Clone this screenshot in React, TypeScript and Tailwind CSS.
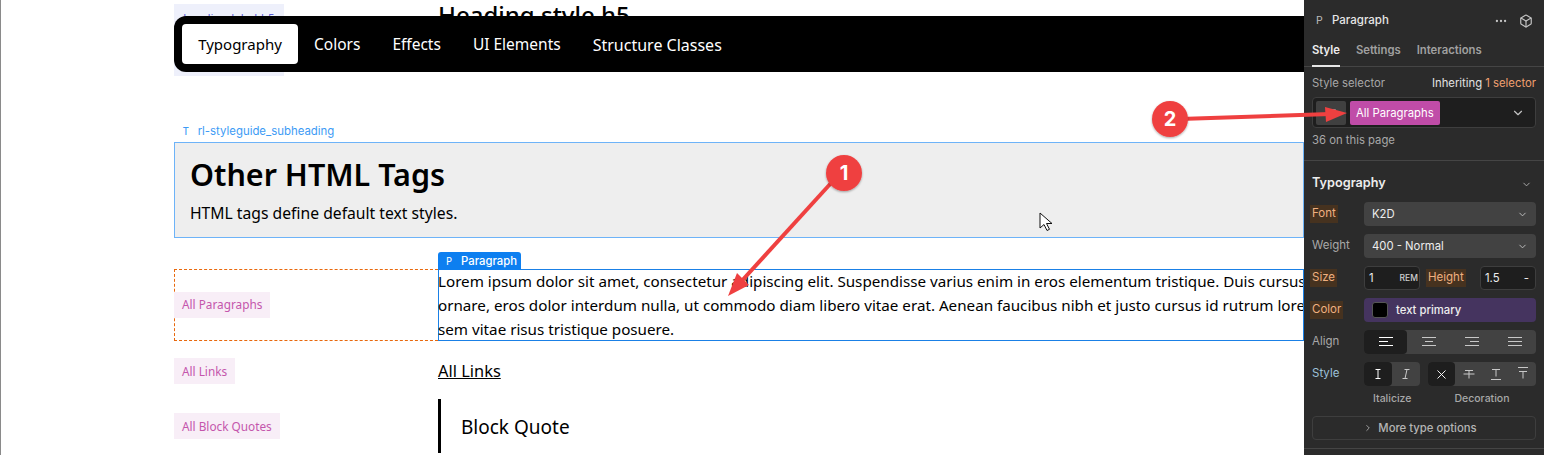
import { ChevronDown, ChevronRight, Ellipsis, Box, X } from "lucide-react";

const uiFont = "font-['Inter',sans-serif]";
const pageFont = "font-['Noto_Sans',sans-serif]";

function TagLabel({ text, className = "" }: { text: string; className?: string }) {
  return (
    <span className={`inline-flex h-[26px] items-center bg-[#f8eef7] px-2 text-[11.8px] text-[#c456ac] ${className}`}>
      {text}
    </span>
  );
}

function AlignIcon({ lines }: { lines: [number, number][] }) {
  return (
    <svg width="16" height="12" viewBox="0 0 16 12" stroke="currentColor" strokeWidth="1">
      {lines.map(([a, b], i) => (
        <line key={i} x1={a} x2={b} y1={1.5 + i * 4} y2={1.5 + i * 4} />
      ))}
    </svg>
  );
}

function FieldLabel({ text, on }: { text: string; on?: boolean }) {
  return (
    <span className={`-ml-[2px] inline-flex h-[18px] items-center px-0.5 text-[11.5px] ${on ? "bg-[#46321f] text-[#f0b080]" : "text-[#a8a8a8]"}`}>
      {text}
    </span>
  );
}

function Panel() {
  return (
    <aside className={`flex h-[455px] w-[240px] shrink-0 flex-col overflow-hidden bg-[#2b2b2b] text-[11.3px] ${uiFont}`}>
      {/* Header */}
      <div className="flex h-[40px] items-center pl-[12px] pr-[11px] pt-[1px] text-[#e6e6e6]">
        <span className="w-[16px] text-[10.5px] text-[#bdbdbd]">P</span>
        <span className="text-[11.5px] font-medium">Paragraph</span>
        <Ellipsis className="ml-auto h-[14px] w-[14px] text-[#c4c4c4]" />
        <Box className="ml-[11px] h-[14px] w-[14px] text-[#c4c4c4]" />
      </div>

      {/* Tabs */}
      <div className="flex h-[27px] gap-[16px] border-b border-[#454545] px-[8px] text-[11.3px] font-semibold text-[#a0a0a0]">
        <span className="h-[27px] border-b-2 border-[#e6e6e6] pt-[2px] text-[#ededed]">Style</span>
        <span className="pt-[2px]">Settings</span>
        <span className="pt-[2px]">Interactions</span>
      </div>

      {/* Style selector */}
      <div className="flex h-[94px] flex-col border-b border-[#454545] px-[8px]">
        <div className="flex h-[30px] items-center justify-between pt-[3px] text-[#a8a8a8]">
          <span>Style selector</span>
          <span className="text-[#e2e2e2]">
            Inheriting <span className="text-[#f0a070]">1 selector</span>
          </span>
        </div>
        <div className="flex h-[31px] items-center gap-[4px] rounded-[4px] border border-[#3e3e3e] bg-[#1e1e1e] pl-[3px] pr-[10px]">
          <span className="flex h-[24px] w-[30px] items-center justify-center rounded-[2px] bg-[#404040]">
            <span className="h-[7px] w-[10px] rounded-[1px] bg-[#8a8a8a]" />
          </span>
          <span className="flex h-[24px] items-center rounded-[2px] bg-[#c04ca8] px-[6px] pt-[1px] text-white">All Paragraphs</span>
          <ChevronDown className="ml-auto h-[14px] w-[14px] text-[#c4c4c4]" />
        </div>
        <span className="mt-[4px] text-[#a8a8a8]">36 on this page</span>
      </div>

      {/* Typography */}
      <div className="flex flex-col gap-[8px] px-[8px]">
        <div className="flex h-[33px] items-end justify-between pr-[4px] pb-[2px]">
          <span className="text-[12.7px] font-semibold text-[#ededed]">Typography</span>
          <ChevronDown className="mb-[2px] h-[11px] w-[11px] text-[#b0b0b0]" />
        </div>

        <div className="flex h-[24px] items-center">
          <div className="w-[52px]"><FieldLabel text="Font" on /></div>
          <div className="flex h-[24px] w-[172px] items-center justify-between rounded-[4px] bg-[#424242] pl-[8px] pr-[8px] text-[#ededed]">
            K2D <ChevronDown className="h-[11px] w-[11px] text-[#c4c4c4]" />
          </div>
        </div>

        <div className="flex h-[24px] items-center">
          <div className="w-[52px]"><FieldLabel text="Weight" /></div>
          <div className="flex h-[24px] w-[172px] items-center justify-between rounded-[4px] bg-[#424242] pl-[8px] pr-[8px] text-[#ededed]">
            400 - Normal <ChevronDown className="h-[11px] w-[11px] text-[#c4c4c4]" />
          </div>
        </div>

        <div className="flex h-[24px] items-center">
          <div className="w-[52px]"><FieldLabel text="Size" on /></div>
          <div className="flex h-[24px] w-[56px] items-center justify-between rounded-[4px] border border-[#3e3e3e] bg-[#1e1e1e] pl-[4px] pr-[1px] text-[#ededed]">
            1 <span className="text-[8.5px] font-medium text-[#d0d0d0]">REM</span>
          </div>
          <div className="ml-[8px] w-[52px]"><FieldLabel text="Height" on /></div>
          <div className="flex h-[24px] w-[56px] items-center justify-between rounded-[4px] border border-[#3e3e3e] bg-[#1e1e1e] pl-[4px] pr-[6px] text-[#ededed]">
            1.5 <span>-</span>
          </div>
        </div>

        <div className="flex h-[24px] items-center">
          <div className="w-[52px]"><FieldLabel text="Color" on /></div>
          <div className="flex h-[24px] w-[172px] items-center gap-[8px] rounded-[4px] bg-[#45345f] pl-[8px] font-medium text-[#ededed]">
            <span className="h-[16px] w-[16px] rounded-[3px] border border-[#555] bg-black" />
            text primary
          </div>
        </div>

        <div className="flex h-[24px] items-center">
          <div className="w-[52px]"><FieldLabel text="Align" /></div>
          <div className="grid h-[24px] w-[172px] grid-cols-4 items-center rounded-[4px] bg-[#424242] text-[#c8c8c8]">
            <span className="flex h-[24px] items-center justify-center rounded-[4px] bg-[#1e1e1e] text-white">
              <AlignIcon lines={[[1, 15], [1, 10], [1, 15]]} />
            </span>
            <span className="flex justify-center"><AlignIcon lines={[[1, 15], [4, 12], [1, 15]]} /></span>
            <span className="flex justify-center"><AlignIcon lines={[[1, 15], [6, 15], [1, 15]]} /></span>
            <span className="flex justify-center"><AlignIcon lines={[[1, 15], [1, 15], [1, 15]]} /></span>
          </div>
        </div>

        <div className="flex h-[24px] items-center">
          <div className="w-[52px]"><span className="-ml-[2px] px-0.5 text-[11.5px] text-[#9cc0d8]">Style</span></div>
          <div className="flex h-[24px] w-[56px] rounded-[4px] bg-[#424242] text-[#c8c8c8]">
            <span className="flex w-[28px] items-center justify-center rounded-[4px] bg-[#1e1e1e] text-white">
              <svg width="10" height="12" viewBox="0 0 10 12" stroke="currentColor"><path d="M2.5 1.5h5M5 1.5v9M2.5 10.5h5" /></svg>
            </span>
            <span className="flex w-[28px] items-center justify-center">
              <svg width="10" height="12" viewBox="0 0 10 12" stroke="currentColor"><path d="M3.5 1.5h5M6 1.5l-2 9M1.5 10.5h5" /></svg>
            </span>
          </div>
          <div className="ml-[8px] flex h-[24px] w-[108px] rounded-[4px] bg-[#424242] text-[#c8c8c8]">
            <span className="flex w-[27px] items-center justify-center rounded-[4px] bg-[#1e1e1e] text-white">
              <X className="h-[15px] w-[15px]" strokeWidth={1.5} />
            </span>
            <span className="flex w-[27px] items-center justify-center">
              <svg width="12" height="12" viewBox="0 0 12 12" stroke="currentColor"><path d="M2 2.5h8M6 2.5v8M0.5 6h11" /></svg>
            </span>
            <span className="flex w-[27px] items-center justify-center">
              <svg width="12" height="14" viewBox="0 0 12 14" stroke="currentColor"><path d="M2 2.5h8M6 2.5v7M1 12.5h10" /></svg>
            </span>
            <span className="flex w-[27px] items-center justify-center">
              <svg width="12" height="14" viewBox="0 0 12 14" stroke="currentColor"><path d="M1 0.5h10M2 4.5h8M6 4.5v7" /></svg>
            </span>
          </div>
        </div>
      </div>

      <div className="mt-[5px] flex h-[16px] items-center px-[8px] text-[10.5px] font-medium text-[#a8a8a8]">
        <span className="ml-[61px]">Italicize</span>
        <span className="ml-[43px]">Decoration</span>
      </div>

      <div className="mx-[8px] mt-[9px] flex h-[24px] items-center justify-center gap-[5px] rounded-[4px] border border-[#3e3e3e] pr-[8px] font-medium text-[#b4b4b4]">
        <ChevronRight className="h-[10px] w-[10px]" /> More type options
      </div>
      <div className="mt-[8px] border-t border-[#454545]" />
    </aside>
  );
}

function Main() {
  return (
    <main className={`relative h-[455px] flex-1 overflow-hidden border-l border-[#8a8a8a] bg-white text-black ${pageFont}`}>
      <div className="pl-[173px]">
        {/* Heading rows hidden under the nav */}
        <div className="flex h-[121px]">
          <div className="w-[264px] shrink-0 pt-[4px]">
            <span className="inline-flex h-[72px] w-[110px] justify-center bg-[#eef0fb] pt-[5px] text-[11.5px] text-[#5c5cd8]">heading-label-h5</span>
          </div>
          <div className="-mt-[2px] text-[24px] font-medium leading-[34px]">
            Heading style h5
            <div className="mt-[15px] text-[20px] leading-[26px]">Heading style h6</div>
          </div>
        </div>

        {/* Subheading */}
        <div className="flex h-[21px] items-center gap-[9px] pl-[9px] text-[11.4px] text-[#3d9bf5]">
          <span className="text-[10px] font-medium">T</span>
          <span className={uiFont}>rl-styleguide_subheading</span>
        </div>
        <div className="h-[96px] border border-[#6db3f8] bg-[#eeeeee] pl-[15px] pt-[11px]">
          <h2 className="text-[30.5px] font-semibold leading-[40px]">Other HTML Tags</h2>
          <p className="mt-[9px] text-[15.7px] leading-[20px]">HTML tags define default text styles.</p>
        </div>

        {/* Paragraph row */}
        <div className="mt-[31px] flex h-[72px]">
          <div className="flex w-[264px] shrink-0 items-center border border-r-0 border-dashed border-[#e8680c]">
            <TagLabel text="All Paragraphs" className="-ml-px" />
          </div>
          <div className="relative min-w-0 flex-1 border border-[#1a80e6]">
            <div className="absolute -top-[18px] -left-px flex h-[18px] items-center gap-[9px] rounded-t-[3px] bg-[#0d7ff0] pl-[8px] pr-[4px] text-white">
              <span className="text-[10px] font-normal">P</span>
              <span className={`text-[11.3px] font-medium ${uiFont}`}>Paragraph</span>
            </div>
            <p className="-ml-px -mt-px overflow-hidden whitespace-nowrap text-[15.2px] leading-[24px]">
              Lorem ipsum dolor sit amet, consectetur adipiscing elit. Suspendisse varius enim in eros elementum tristique. Duis cursus
              <br />
              ornare, eros dolor interdum nulla, ut commodo diam libero vitae erat. Aenean faucibus nibh et justo cursus id rutrum lorem
              <br />
              sem vitae risus tristique posuere.
            </p>
          </div>
        </div>

        {/* Links */}
        <div className="mt-[17px] flex h-[26px] items-center">
          <div className="w-[264px] shrink-0"><TagLabel text="All Links" /></div>
          <a className="text-[16.4px] underline">All Links</a>
        </div>

        {/* Block quote */}
        <div className="mt-[15px] flex h-[54px] items-center">
          <div className="w-[264px] shrink-0"><TagLabel text="All Block Quotes" /></div>
          <div className="flex h-[54px] items-center border-l-[3px] border-black pl-[20px] pt-[2px] text-[19px]">Block Quote</div>
        </div>
      </div>

      {/* Sticky nav over the page */}
      <nav className="absolute left-[173px] top-[16px] flex h-[56px] w-[1131px] items-center gap-[8px] rounded-l-[12px] bg-black pl-[8px] text-[15.5px] text-white">
        <span className="flex h-[40px] w-[116px] items-center justify-center rounded-[4px] bg-white text-[15px] text-black">Typography</span>
        <span className="px-[8px] pt-[1px]">Colors</span>
        <span className="ml-[8px] px-[8px] pt-[1px]">Effects</span>
        <span className="ml-[8px] px-[8px] pt-[1px]">UI Elements</span>
        <span className="ml-[8px] px-[8px] pt-[1px] text-[16px]">Structure Classes</span>
      </nav>

      {/* Cursor */}
      <svg className="absolute left-[1038px] top-[212px]" width="14" height="20" viewBox="0 0 14 20">
        <path d="M1 1v15l4-3.5 3 6 2.5-1.2-3-5.8h5.5z" fill="#fff" stroke="#111" strokeWidth="1" />
      </svg>
    </main>
  );
}

function Annotations() {
  return (
    <svg className="pointer-events-none absolute inset-0" width="1544" height="455" viewBox="0 0 1544 455">
      <defs>
        <filter id="shadow" x="-30%" y="-30%" width="160%" height="160%">
          <feDropShadow dx="0" dy="1" stdDeviation="1" floodColor="#000" floodOpacity="0.35" />
        </filter>
      </defs>
      <g fill="#ef4040">
        <line x1="832" y1="182" x2="738" y2="285" stroke="#ef4040" strokeWidth="4" />
        <path d="M728 296 L737 273 L749 285 Z" />
        <line x1="1180" y1="119" x2="1330" y2="114" stroke="#ef4040" strokeWidth="4" />
        <path d="M1347 113 L1325 107 L1326 122 Z" />
      </g>
      <g filter="url(#shadow)">
        <circle cx="844" cy="173" r="18" fill="#ef4040" />
        <circle cx="1170" cy="119" r="18" fill="#ef4040" />
      </g>
      <text x="844" y="180" textAnchor="middle" fontSize="20" fontWeight="700" fill="#fff" fontFamily="Inter, sans-serif">1</text>
      <text x="1170" y="126" textAnchor="middle" fontSize="20" fontWeight="700" fill="#fff" fontFamily="Inter, sans-serif">2</text>
    </svg>
  );
}

export default function App() {
  return (
    <div className="relative flex h-[455px] w-[1544px] overflow-hidden">
      <Main />
      <Panel />
      <Annotations />
    </div>
  );
}
